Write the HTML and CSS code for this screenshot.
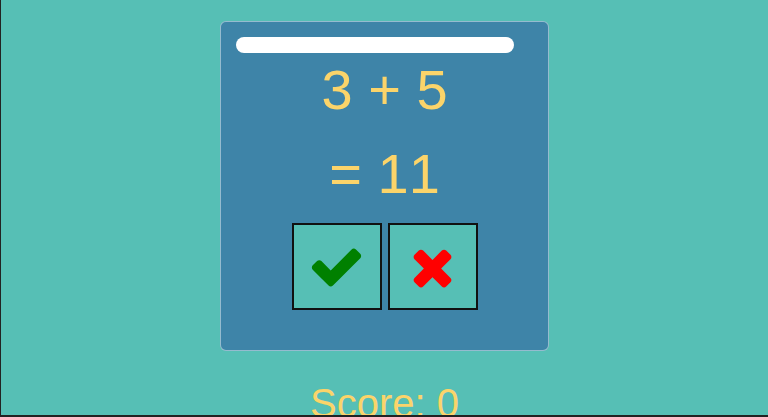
FILE: index.html
```html
<!DOCTYPE html>
<html lang="en">
<head>
  <meta charset="UTF-8">
  <title>Freaking Math</title>
  <meta name="viewport" content="width=device-width, initial-scale=1.0">
  <link rel="stylesheet" href="styles.css">
</head>
<body>
<div class="game">
  <div class="card">
    <div class="timer"><div class="timer-fill"></div></div>
    <p class="problem">3 + 5</p>
    <p class="answer">= 11</p>
    <div class="choices">
      <button class="choice right" aria-label="Right">
        <svg viewBox="0 0 1792 1792" width="57" height="57"><path d="M1671 566q0 40-28 68l-724 724-136 136q-28 28-68 28t-68-28l-136-136-362-362q-28-28-28-68t28-68l136-136q28-28 68-28t68 28l294 295 656-657q28-28 68-28t68 28l136 136q28 28 28 68z"/></svg>
      </button>
      <button class="choice wrong" aria-label="Wrong">
        <svg viewBox="0 0 1792 1792" width="57" height="57"><path d="M1490 1322q0 40-28 68l-136 136q-28 28-68 28t-68-28l-294-294-294 294q-28 28-68 28t-68-28l-136-136q-28-28-28-68t28-68l294-294-294-294q-28-28-28-68t28-68l136-136q28-28 68-28t68 28l294 294 294-294q28-28 68-28t68 28l136 136q28 28 28 68t-28 68l-294 294 294 294q28 28 28 68z"/></svg>
      </button>
    </div>
  </div>
  <p class="score">Score: 0</p>
</div>
</body>
</html>
```

FILE: styles.css
```css
* { box-sizing: border-box; }
html { background: #222; }
body {
  margin: 0 0 2px 1px;
  height: 415px;
  overflow: hidden;
  background: #56bfb5;
  font-family: 'Liberation Sans', Arial, sans-serif;
  font-kerning: none;
  color: #fbd46a;
}
.game {
  display: flex;
  flex-direction: column;
  align-items: center;
  padding-top: 21px;
}
.card {
  width: 329px;
  height: 330px;
  padding: 15px;
  background: #3e84a8;
  border: 1px solid rgba(255, 255, 255, 0.45);
  border-radius: 6px;
  text-align: center;
}
.timer {
  height: 16px;
}
.timer-fill {
  width: 278px;
  height: 16px;
  background: #fff;
  border-radius: 8px;
}
.problem, .answer {
  margin: 0;
  font-size: 56px;
  line-height: 64px;
}
.problem { margin-top: 5px; }
.answer { margin-top: 20px; }
.choices {
  display: flex;
  justify-content: center;
  gap: 6px;
  margin-top: 17px;
}
.choice {
  width: 90px;
  height: 87px;
  padding: 0;
  border: 2px solid #111;
  background: #56bfb5;
  display: flex;
  align-items: center;
  justify-content: center;
  cursor: pointer;
}
.right svg { fill: #008000; }
.wrong svg { fill: #ff0000; }
.score {
  margin: 29px 0 0;
  font-size: 40px;
  line-height: 46px;
}
```
